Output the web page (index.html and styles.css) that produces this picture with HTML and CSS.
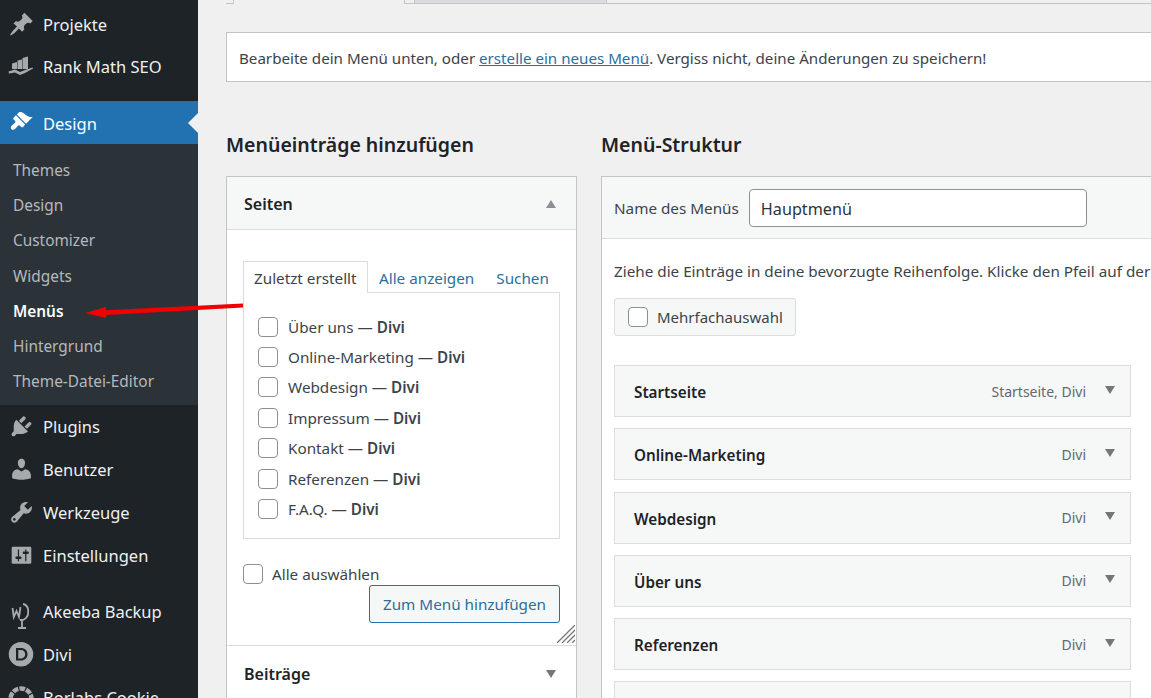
FILE: index.html
```html
<!DOCTYPE html>
<html lang="de">
<head>
<meta charset="utf-8">
<title>Menüs</title>
<link rel="stylesheet" href="styles.css">
</head>
<body>
<div class="page">
  <aside class="sidebar">
    <ul class="menu first">
      <li class="item"><svg class="ico" viewBox="-0.4 0.6 20.8 18.8"><path d="M10.44 3.02l1.82-1.82 6.36 6.35-1.83 1.82c-1.05-.68-2.48-.57-3.41.36l-.75.75c-.92.93-1.04 2.35-.35 3.41l-1.83 1.82-2.41-2.41-2.8 2.79c-.42.42-3.38 2.71-3.8 2.29s1.86-3.39 2.28-3.81l2.79-2.79L3.9 9.36l1.83-1.82c1.05.69 2.48.57 3.4-.36l.75-.75c.93-.92 1.05-2.35.36-3.41z"/></svg><span>Projekte</span></li>
      <li class="item"><svg class="ico" viewBox="0 0 27 24.5"><path d="M4 8.500l5-1.500v7H4zM9.500 5.500l4.500-1v9.500H9.500zM14.500 3l5.500-1.500V14h-5.500zM.5 16.500L7 14.500l5 2.500 5-2 7.500-2.500.5 1-8 4.500-5 2-5-2.500-6 1z"/></svg><span>Rank Math SEO</span></li>
    </ul>
    <div class="current"><svg class="ico" viewBox="0.6 0.6 20.8 18.8"><path d="M14.48 11.06L7.41 3.99l1.5-1.5c.5-.56 2.3-.47 3.51.32 1.21.8 1.43 1.28 2.91 2.1 1.18.64 2.45 1.26 4.45.85zm-.71.71L6.7 4.7 4.93 6.47c-.39.39-.39 1.02 0 1.41l1.06 1.06c.39.39.39 1.03 0 1.42-.6.6-1.43 1.15-2.21 1.93-.99 1.01-1.29 2.3-.48 3.1.8.8 2.09.51 3.09-.49.79-.79 1.34-1.62 1.94-2.22.39-.39 1.03-.39 1.42 0l1.06 1.06c.39.39 1.02.39 1.41 0z"/></svg><span>Design</span></div>
    <ul class="submenu">
      <li>Themes</li>
      <li>Design</li>
      <li>Customizer</li>
      <li>Widgets</li>
      <li class="on">Menüs</li>
      <li>Hintergrund</li>
      <li>Theme-Datei-Editor</li>
    </ul>
    <ul class="menu">
      <li class="item"><svg class="ico" viewBox="-0.4 0.6 20.8 18.8"><path d="M13.11 4.36L9.87 7.6 8 5.73l3.24-3.24c.35-.34 1.05-.2 1.56.32.52.51.66 1.21.31 1.55zm-8 1.77l.91-1.12 9.01 9.01-1.19.84c-.71.71-2.63 1.16-3.82 1.16H6.14L4.9 17.26c-.59.59-1.54.59-2.12 0-.59-.58-.59-1.53 0-2.12l1.24-1.24v-3.88c0-1.13.4-3.05 1.09-3.89zm7.26 3.97l3.24-3.24c.34-.35 1.04-.21 1.55.31.52.51.66 1.21.31 1.56l-3.24 3.25z"/></svg><span>Plugins</span></li>
      <li class="item"><svg class="ico" viewBox="-0.4 0.6 20.8 18.8"><path d="M10 9.25c-2.27 0-2.73-3.44-2.73-3.44C7 4.02 7.82 2 9.97 2c2.16 0 2.98 2.02 2.71 3.81 0 0-.41 3.44-2.68 3.44zm0 2.57L12.72 10c2.39 0 4.52 2.33 4.52 4.53v2.49s-3.65 1.13-7.24 1.13c-3.65 0-7.24-1.13-7.24-1.13v-2.49c0-2.25 1.94-4.53 4.44-4.53z"/></svg><span>Benutzer</span></li>
      <li class="item"><svg class="ico" viewBox="-0.4 0.6 20.8 18.8"><path d="M16.68 9.77c-1.34 1.34-3.3 1.67-4.95.99l-5.41 6.52c-.99.99-2.59.99-3.57 0-.99-.98-.99-2.58 0-3.57l6.52-5.42c-.68-1.65-.35-3.61.99-4.95 1.28-1.28 3.12-1.62 4.72-1.06l-2.89 2.89 2.82 2.82 2.86-2.87c.53 1.58.18 3.4-1.09 4.67zM3.81 16.21c.4.39 1.03.39 1.42 0 .4-.4.4-1.03 0-1.43-.39-.39-1.02-.39-1.42 0-.39.4-.39 1.03 0 1.43z"/></svg><span>Werkzeuge</span></li>
      <li class="item"><svg class="ico" viewBox="-1 0 22 20"><path d="M18 16V4c0-.55-.45-1-1-1H3c-.55 0-1 .45-1 1v12c0 .55.45 1 1 1h14c.55 0 1-.45 1-1zM8 11h1c.55 0 1 .45 1 1s-.45 1-1 1H8v1.5c0 .28-.22.5-.5.5s-.5-.22-.5-.5V13H6c-.55 0-1-.45-1-1s.45-1 1-1h1V5.500c0-.28.22-.5.5-.5s.5.22.5.5V11zm5-2h-1c-.55 0-1-.45-1-1s.45-1 1-1h1V5.500c0-.28.22-.5.5-.5s.5.22.5.5V7h1c.55 0 1 .45 1 1s-.45 1-1 1h-1v5.500c0 .28-.22.5-.5.5s-.5-.22-.5-.5V9z"/></svg><span>Einstellungen</span></li>
    </ul>
    <ul class="menu second">
      <li class="item"><svg class="ico line" viewBox="0 0 27 24.5"><path d="M4.500 9l1.300 9 2.700-6 2.500 6 1.500-10M15 5c6.500 1 7.500 13 0 16h-3M14 21v7M10 29h8"/></svg><span>Akeeba Backup</span></li>
      <li class="item"><svg class="ico" viewBox="0 0 27 24.5"><path fill-rule="evenodd" d="M13 0a12.250 12.250 0 1 1 0 24.500A12.250 12.250 0 0 1 13 0zM8 6v12.500h4.800c4 0 6.700-2.500 6.700-6.250S16.800 6 12.800 6zM10.300 8h2.500c2.700 0 4.400 1.800 4.400 4.250s-1.700 4.250-4.400 4.250h-2.500z"/></svg><span>Divi</span></li>
      <li class="item"><svg class="ico line ring" viewBox="0 0 27 24.5"><circle cx="13" cy="14" r="10.500"/></svg><span>Borlabs Cookie</span></li>
    </ul>
  </aside>

  <main class="content">
    <div class="tabs">
      <span class="tab-stub"></span>
      <span class="tab-active"></span>
      <span class="tab-gap"></span>
      <span class="tab-inactive"></span>
      <span class="tab-rest"></span>
    </div>
    <p class="notice">Bearbeite dein Menü unten, oder <a href="#">erstelle ein neues Menü</a>. Vergiss nicht, deine Änderungen zu speichern!</p>

    <div class="columns">
      <section class="left">
        <h2>Menüeinträge hinzufügen</h2>
        <div class="box">
          <div class="box-head"><h3>Seiten</h3><span class="tri up"></span></div>
          <div class="box-body">
            <div class="picker-tabs">
              <span class="picker-active">Zuletzt erstellt</span>
              <a href="#" class="all">Alle anzeigen</a>
              <a href="#" class="find">Suchen</a>
            </div>
            <ul class="pages">
              <li><span class="check"></span><span>Über uns — <b>Divi</b></span></li>
              <li><span class="check"></span><span>Online-Marketing — <b>Divi</b></span></li>
              <li><span class="check"></span><span>Webdesign — <b>Divi</b></span></li>
              <li><span class="check"></span><span>Impressum — <b>Divi</b></span></li>
              <li><span class="check"></span><span>Kontakt — <b>Divi</b></span></li>
              <li><span class="check"></span><span>Referenzen — <b>Divi</b></span></li>
              <li><span class="check"></span><span>F.A.Q. — <b>Divi</b></span></li>
            </ul>
            <div class="select-all"><span class="check"></span><span>Alle auswählen</span></div>
            <div class="add-row"><button class="add">Zum Menü hinzufügen</button></div>
            <svg class="grip" viewBox="0 0 18 18"><path d="M0 18L18 0M5 18L18 5M10 18l8-8M15 18l3-3"/></svg>
          </div>
          <div class="box-head closed"><h3>Beiträge</h3><span class="tri"></span></div>
        </div>
      </section>

      <section class="right">
        <h2>Menü-Struktur</h2>
        <div class="box wide">
          <div class="name-row"><label>Name des Menüs</label><span class="name-input">Hauptmenü</span></div>
          <div class="wide-body">
            <p class="hint">Ziehe die Einträge in deine bevorzugte Reihenfolge. Klicke den Pfeil auf der rechten Seite des Eintrags, um weitere Einstellungen zu zeigen.</p>
            <div class="multi"><span class="check"></span><span>Mehrfachauswahl</span></div>
            <ul class="items">
              <li><b>Startseite</b><span class="meta">Startseite, Divi</span><span class="tri small"></span></li>
              <li><b>Online-Marketing</b><span class="meta">Divi</span><span class="tri small"></span></li>
              <li><b>Webdesign</b><span class="meta">Divi</span><span class="tri small"></span></li>
              <li><b>Über uns</b><span class="meta">Divi</span><span class="tri small"></span></li>
              <li><b>Referenzen</b><span class="meta">Divi</span><span class="tri small"></span></li>
              <li></li>
            </ul>
          </div>
        </div>
      </section>
    </div>
  </main>
  <svg class="arrow" viewBox="0 0 160 20"><path d="M158 2.500L21 9.300V6L0 12l21 5v-3l137-7.500z"/></svg>
</div>
</body>
</html>
```
FILE: styles.css
```css
* { box-sizing: border-box; }
html, body { margin: 0; padding: 0; height: 100%; overflow: hidden; }
body { background: #f0f0f1; color: #3c434a; font-family: "Noto Sans", "Liberation Sans", sans-serif; font-size: 15.25px; }
ul { list-style: none; margin: 0; padding: 0; }
a { color: #2271b1; text-decoration: none; }
h2, h3, p { margin: 0; }

.page { position: relative; display: flex; width: 1151px; height: 698px; overflow: hidden; }

.sidebar { flex: 0 0 198px; background: #1d2327; color: #f0f0f1; font-size: 16.5px; padding-top: 3px; height: 698px; overflow: hidden; }
.menu.first { margin-bottom: 13px; }
.menu.first .item { height: 42.5px; }
.menu.second { margin-top: 13px; }
.item, .current { display: flex; align-items: center; height: 43px; padding-left: 8px; gap: 8px; }
.ico { width: 27px; height: 24.5px; fill: #a7aaad; flex: none; overflow: visible; }
.ico.line { fill: none; stroke: #a7aaad; stroke-width: 1.8; }
.ico.ring { stroke-width: 4.5; stroke-dasharray: 5.6 1.2; }
.current { background: #2271b1; color: #fff; position: relative; padding-top: 2px; }
.current .ico { fill: #fff; margin-top: -2px; }
.current::after { content: ""; position: absolute; right: 0; top: 50%; margin-top: -10px; border: 10px solid transparent; border-right-color: #f0f0f1; border-left: 0; }
.submenu { background: #2c3338; color: #b4b9be; font-size: 15.4px; padding: 9px 0 7px; height: 261px; }
.submenu li { height: 35.2px; line-height: 35px; padding-left: 13px; }
.submenu .on { color: #fff; font-weight: 600; }

.content { flex: 1; min-width: 0; padding-left: 28px; }
.tabs { display: flex; height: 4px; margin-bottom: 28px; width: 1000px; }
.tab-stub { width: 8px; border-bottom: 1px solid #c3c4c7; border-right: 1px solid #c3c4c7; }
.tab-active { width: 170px; }
.tab-gap { width: 10px; border-left: 1px solid #c3c4c7; border-bottom: 1px solid #c3c4c7; }
.tab-inactive { width: 193px; background: #dcdcde; border: 1px solid #c3c4c7; border-top: 0; }
.tab-rest { flex: 1; border-bottom: 1px solid #c3c4c7; }

.notice { width: 1000px; height: 50px; background: #fff; border: 1px solid #c3c4c7; font-size: 15.15px; line-height: 50px; padding-left: 12px; white-space: nowrap; }
.notice a { text-decoration: underline; color: #2c6e9e; }

.columns { display: grid; grid-template-columns: 351px 1000px; column-gap: 24px; margin-top: 47px; }
h2 { font-size: 19.5px; font-weight: 600; color: #1d2327; line-height: 32px; height: 47px; }

.box { background: #fff; border: 1px solid #c3c4c7; }
.box-head { display: flex; align-items: center; justify-content: space-between; height: 53px; padding: 2px 20px 0 17px; background: #f6f7f7; border-bottom: 1px solid #dcdcde; }
.box-head h3 { font-size: 16px; font-weight: 600; color: #1d2327; }
.box-head.closed { background: #fff; border-bottom: 0; border-top: 1px solid #dcdcde; height: 56px; padding-top: 0; }
.tri { width: 0; height: 0; border-left: 5.5px solid transparent; border-right: 5.5px solid transparent; border-top: 8px solid #72777c; }
.tri.up { border-top: 0; border-bottom: 8px solid #8c8f94; }

.box-body { position: relative; height: 415px; padding: 31px 16px 0; }
.picker-tabs { display: flex; align-items: flex-end; height: 32px; }
.picker-active { height: 32px; line-height: 32px; padding: 0 10px; background: #fff; border: 1px solid #dcdcde; border-bottom: 0; position: relative; z-index: 1; width: 125px; white-space: nowrap; }
.all { margin-left: 11px; line-height: 30px; color: #2c6e9e; }
.find { margin-left: 22px; line-height: 30px; color: #2c6e9e; }
.pages { height: 247px; margin-top: -1px; padding-top: 18.5px; border: 1px solid #dcdcde; }
.pages li { display: flex; align-items: center; height: 30.4px; padding-left: 14px; gap: 10px; }
.check { width: 20px; height: 20px; flex: none; background: #fff; border: 1px solid #8c8f94; border-radius: 4px; }
b { font-weight: 600; }

.select-all { display: flex; align-items: center; gap: 9px; margin-top: 25px; height: 20px; }
.add-row { display: flex; justify-content: flex-end; margin-top: 1px; }
.add { width: 191px; height: 38px; padding: 0; font: inherit; color: #2c6e9e; background: #f6f7f7; border: 1px solid #2271b1; border-radius: 3px; }
.grip { position: absolute; right: 1px; bottom: 2px; width: 18px; height: 18px; fill: none; stroke: #777; stroke-width: 1.3; }

.wide { width: 1000px; }
.name-row { display: flex; align-items: center; height: 62px; padding-left: 12px; gap: 10px; background: #f6f7f7; border-bottom: 1px solid #dcdcde; }
.name-input { width: 338px; height: 38px; line-height: 38px; padding-left: 11px; font-size: 16.2px; color: #2c3338; background: #fff; border: 1px solid #8c8f94; border-radius: 4px; }
.wide-body { padding: 0 12px; height: 1000px; }
.hint { line-height: 22px; padding-top: 21px; white-space: nowrap; }
.multi { display: inline-flex; align-items: center; gap: 9px; width: 182px; height: 38px; margin-top: 16px; padding-left: 13px; background: #f6f7f7; border: 1px solid #dcdcde; border-radius: 3px; font-size: 15px; }
.items { width: 517px; margin-top: 29px; }
.items li { display: flex; align-items: center; height: 52px; margin-bottom: 11.25px; padding: 0 15px 0 19px; background: #f6f7f7; border: 1px solid #dcdcde; }
.items b { color: #1d2327; flex: 1; padding-top: 2px; }
.meta { color: #646970; font-size: 14px; }
.tri.small { margin-left: 19px; margin-top: -3px; }

.arrow { position: absolute; left: 85px; top: 301px; width: 160px; height: 20px; fill: #f00000; }
```
